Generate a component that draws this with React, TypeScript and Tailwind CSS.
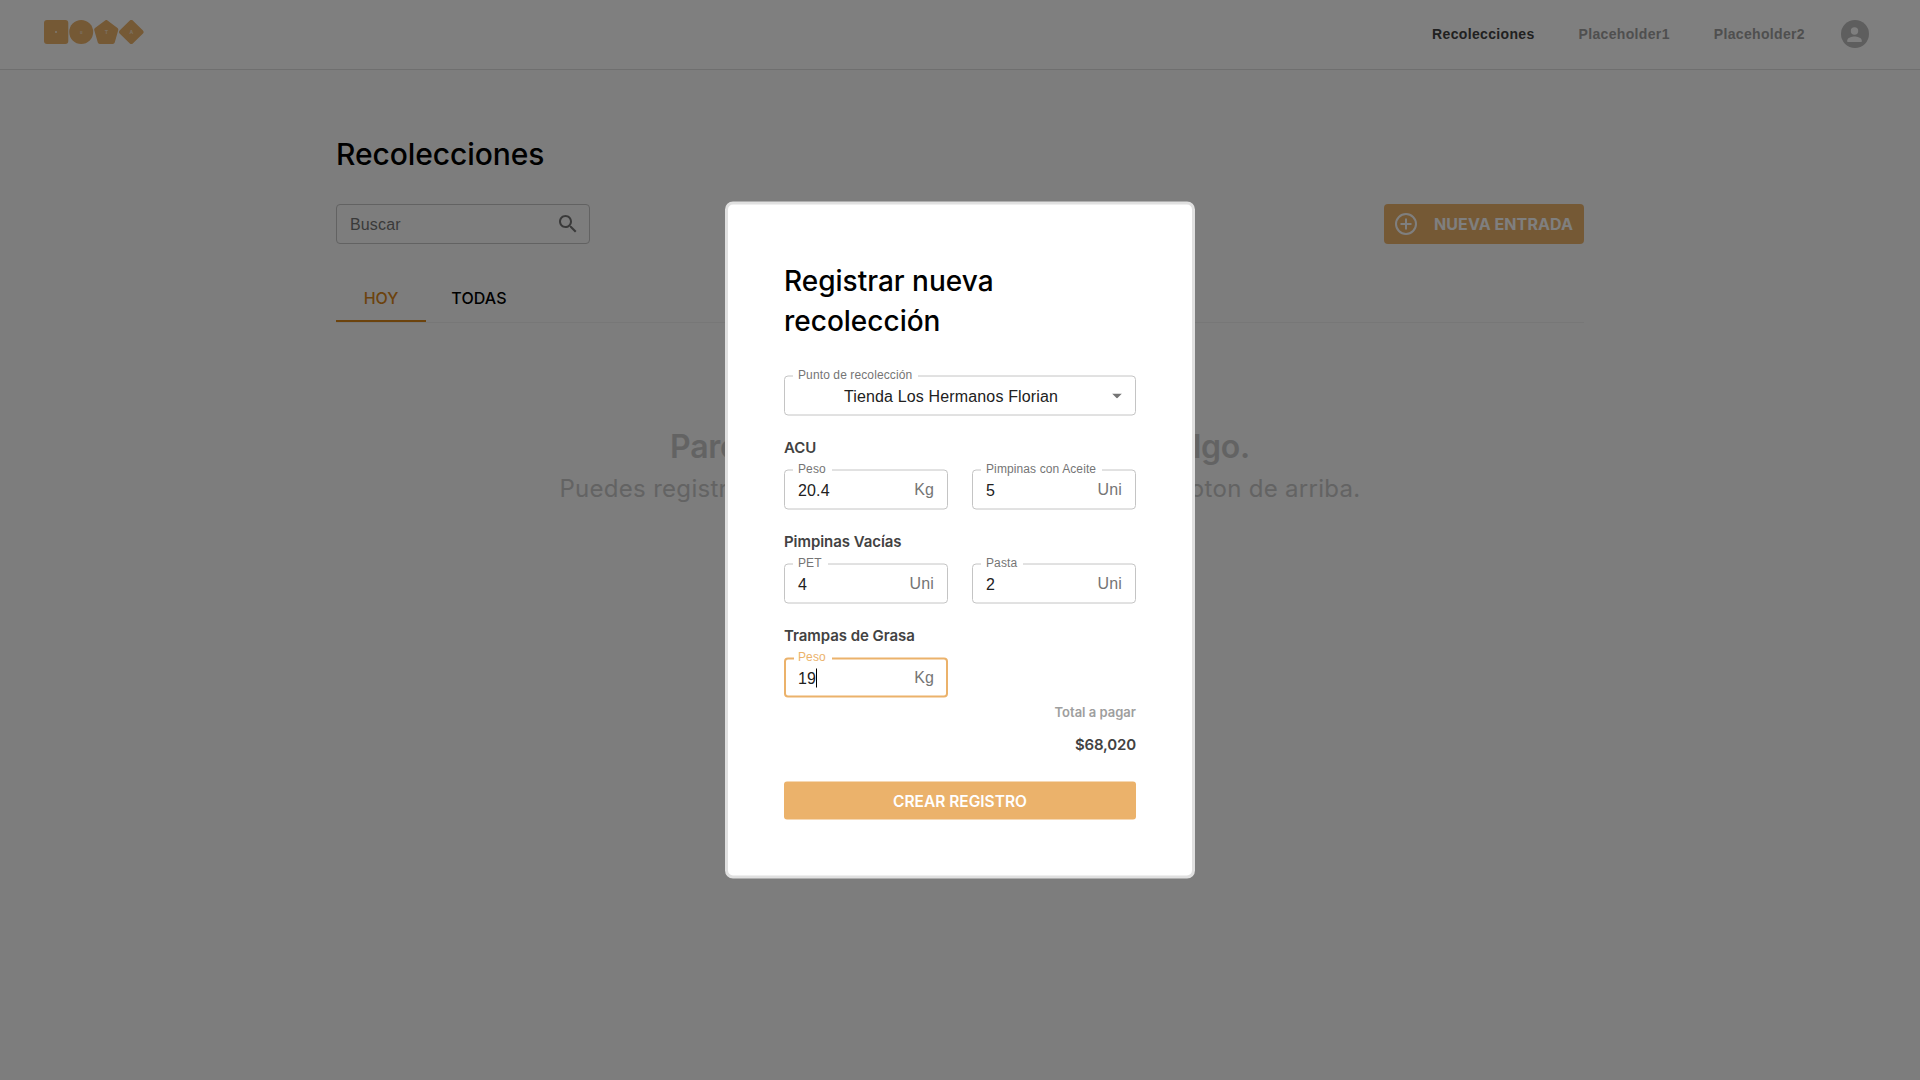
import type { ReactNode } from "react";

function Logo() {
  return (
    <svg width="101" height="24" viewBox="0 0 101 24" className="block">
      <g fill="#ebb26b" stroke="#ebb26b" strokeLinejoin="round">
        <rect x="0" y="0" width="24.3" height="24" rx="3" stroke="none" />
        <circle cx="37.2" cy="12" r="12" stroke="none" />
        <path d="M62.3 2 L72.300 9.6 L68.800 22 H55.700 L52.200 9.6 Z" strokeWidth="4" />
        <path d="M87.300 2.500 L97 12 L87.300 21.500 L77.600 12 Z" strokeWidth="5" />
      </g>
      <g fill="#ffffff" fillOpacity="0.6" fontFamily="Inter, sans-serif" fontWeight="700" textAnchor="middle">
        <rect x="11" y="11" width="2" height="2" />
        <text x="37.3" y="13.500" fontSize="4">u</text>
        <text x="62.3" y="14" fontSize="5">T</text>
        <text x="87.300" y="14" fontSize="5">A</text>
      </g>
    </svg>
  );
}

function Header() {
  return (
    <header className="flex h-[70px] items-center justify-between border-b border-[#dfdfdf] bg-white pr-[51px] pl-11">
      <div className="-mt-[5px]">
        <Logo />
      </div>
      <nav className="flex items-center font-['Liberation_Sans',sans-serif] text-[14px] leading-5 font-bold tracking-[0.34px] text-[#9e9e9e]">
        <a className="mr-[44px] -mt-[2px] text-[#424242]">Recolecciones</a>
        <a className="mr-[44px] -mt-[2px]">Placeholder1</a>
        <a className="mr-9 -mt-[2px]">Placeholder2</a>
        <svg width="28" height="28" viewBox="0 0 28 28" className="-mt-px">
          <circle cx="14" cy="14" r="14" fill="#bdbdbd" />
          <circle cx="13.500" cy="11" r="3.700" fill="#fff" />
          <path d="M6.300 22v-1.800c0-2.600 4.800-3.800 7.200-3.800s7.200 1.200 7.200 3.800V22z" fill="#fff" />
        </svg>
      </nav>
    </header>
  );
}

function Field({
  label,
  unit,
  focused = false,
  centered = false,
  children,
}: {
  label: string;
  unit?: ReactNode;
  focused?: boolean;
  centered?: boolean;
  children: ReactNode;
}) {
  return (
    <div className="relative h-10 w-full font-['Liberation_Sans',sans-serif]">
      <fieldset
        className={
          focused
            ? "absolute inset-x-0 -top-[5px] bottom-0 rounded-[4px] border-2 border-[#ebb26b] pr-2 pl-[7.500px]"
            : "absolute inset-x-0 -top-[5px] bottom-0 rounded-[4px] border border-[#c4c4c4] px-[8px]"
        }
      >
        <legend
          className={
            focused
              ? "h-[11px] pr-[6px] pl-[4.500px] text-[12px] leading-[9px] tracking-[0.11px] whitespace-nowrap text-[#ebb26b]"
              : "h-[11px] pr-[6px] pl-[5px] text-[12px] leading-[9px] tracking-[0.11px] whitespace-nowrap text-[#757575]"
          }
        >
          {label}
        </legend>
      </fieldset>
      <div className="relative flex h-10 items-center justify-between px-[14px] text-[16px] leading-6 tracking-[0.15px] text-[#212121]">
        <span className={centered ? "flex-1 pt-[2px] pr-[8px] text-center" : "flex items-center pt-[2px]"}>
          {children}
        </span>
        <span className="text-[#757575]">{unit}</span>
      </div>
    </div>
  );
}

function Section({ title, children }: { title: string; children: ReactNode }) {
  return (
    <section className="mb-[22px]">
      <h3 className="mb-[12px] text-[15px] leading-5 font-semibold tracking-[-0.06px] text-[#424242]">{title}</h3>
      <div className="grid grid-cols-2 gap-6">{children}</div>
    </section>
  );
}

function Modal() {
  return (
    <div className="fixed inset-0 bg-black/50">
      <div className="absolute top-1/2 left-1/2 h-[677px] w-[470px] -translate-x-1/2 -translate-y-1/2 rounded-[8px] border-[3px] border-[#e0e0e0] bg-white p-14">
        <h2 className="text-[28px] leading-10 font-medium text-black">
          Registrar nueva
          <br />
          recolección
        </h2>
        <div className="mt-[35px] mb-[22px]">
          <Field
            label="Punto de recolección"
            centered
            unit={
              <svg width="10" height="5" viewBox="0 0 10 5" className="block">
                <path d="M0 0h10L5 5z" fill="#757575" />
              </svg>
            }
          >
            Tienda Los Hermanos Florian
          </Field>
        </div>
        <Section title="ACU">
          <Field label="Peso" unit="Kg">20.4</Field>
          <Field label="Pimpinas con Aceite" unit="Uni">5</Field>
        </Section>
        <Section title="Pimpinas Vacías">
          <Field label="PET" unit="Uni">4</Field>
          <Field label="Pasta" unit="Uni">2</Field>
        </Section>
        <Section title="Trampas de Grasa">
          <Field label="Peso" unit="Kg" focused>
            19
            <span className="-mt-[2px] h-[19px] w-px bg-black" />
          </Field>
        </Section>
        <div className="-mt-[22px] flex flex-col items-end">
          <p className="mt-1 text-[13px] leading-5 font-semibold text-[#9e9e9e]">Total a pagar</p>
          <p className="mt-[11px] text-[15px] leading-6 font-semibold tracking-[-0.15px] text-[#424242]">$68,020</p>
        </div>
        <button className="mt-[25px] h-[38px] w-full rounded-[3px] bg-[#ebb26b] pt-px text-[15.500px] leading-6 font-semibold text-white">
          CREAR REGISTRO
        </button>
      </div>
    </div>
  );
}

export default function App() {
  return (
    <div className="h-screen overflow-hidden bg-[#fafafa] font-['Inter',sans-serif]">
      <Header />
      <main className="mx-auto w-[1248px] pt-16">
        <h1 className="text-[30px] leading-10 font-medium tracking-[-0.08px] text-black">Recolecciones</h1>
        <div className="mt-[30px] flex items-center justify-between">
          <div className="flex h-10 w-[254px] items-center justify-between rounded-[4px] border border-[#c4c4c4] pr-[9px] pl-[13px] font-['Liberation_Sans',sans-serif] text-[16px] tracking-[0.15px] text-[#757575]">
            <span className="pt-[2px]">Buscar</span>
            <svg width="24" height="24" viewBox="0 0 24 24" fill="#757575">
              <path d="M15.500 14h-.79l-.28-.27C15.410 12.590 16 11.110 16 9.500 16 5.910 13.090 3 9.500 3S3 5.910 3 9.500 5.910 16 9.500 16c1.610 0 3.090-.59 4.230-1.570l.27.28v.79l5 4.990L20.490 19l-4.990-5zm-6 0C7.010 14 5 11.990 5 9.500S7.010 5 9.500 5 14 7.010 14 9.500 11.990 14 9.500 14z" />
            </svg>
          </div>
          <button className="flex h-10 w-[200px] items-center justify-between rounded-[4px] bg-[#ebb26b] pr-[11px] pl-[11px] text-[16px] font-bold tracking-[0.08px] text-white">
            <svg width="22" height="22" viewBox="0 0 22 22" fill="none" stroke="#fff" strokeWidth="2">
              <circle cx="11" cy="11" r="10" />
              <path d="M11 5.500v11M5.500 11h11" />
            </svg>
            NUEVA ENTRADA
          </button>
        </div>
        <div className="mt-[30px] flex h-[49px] border-b border-[#eeeeee] text-[16px] leading-[49px] font-medium">
          <div className="h-[48px] w-[90px] border-b-2 border-[#d9861a] text-center text-[#d9861a]">HOY</div>
          <div className="w-[106px] text-center tracking-[0.1px] text-black">TODAS</div>
        </div>
        <div className="mt-[101px] text-center text-[#c7c7c7]">
          <p className="text-[32px] leading-[46px] font-semibold tracking-[-0.28px] whitespace-nowrap">
            Parece que aún no has agregado algo.
          </p>
          <p className="text-[24px] leading-[38px] tracking-[0.3px] whitespace-nowrap">
            Puedes registrar una nueva recolección utilizando el boton de arriba.
          </p>
        </div>
      </main>
      <Modal />
    </div>
  );
}
